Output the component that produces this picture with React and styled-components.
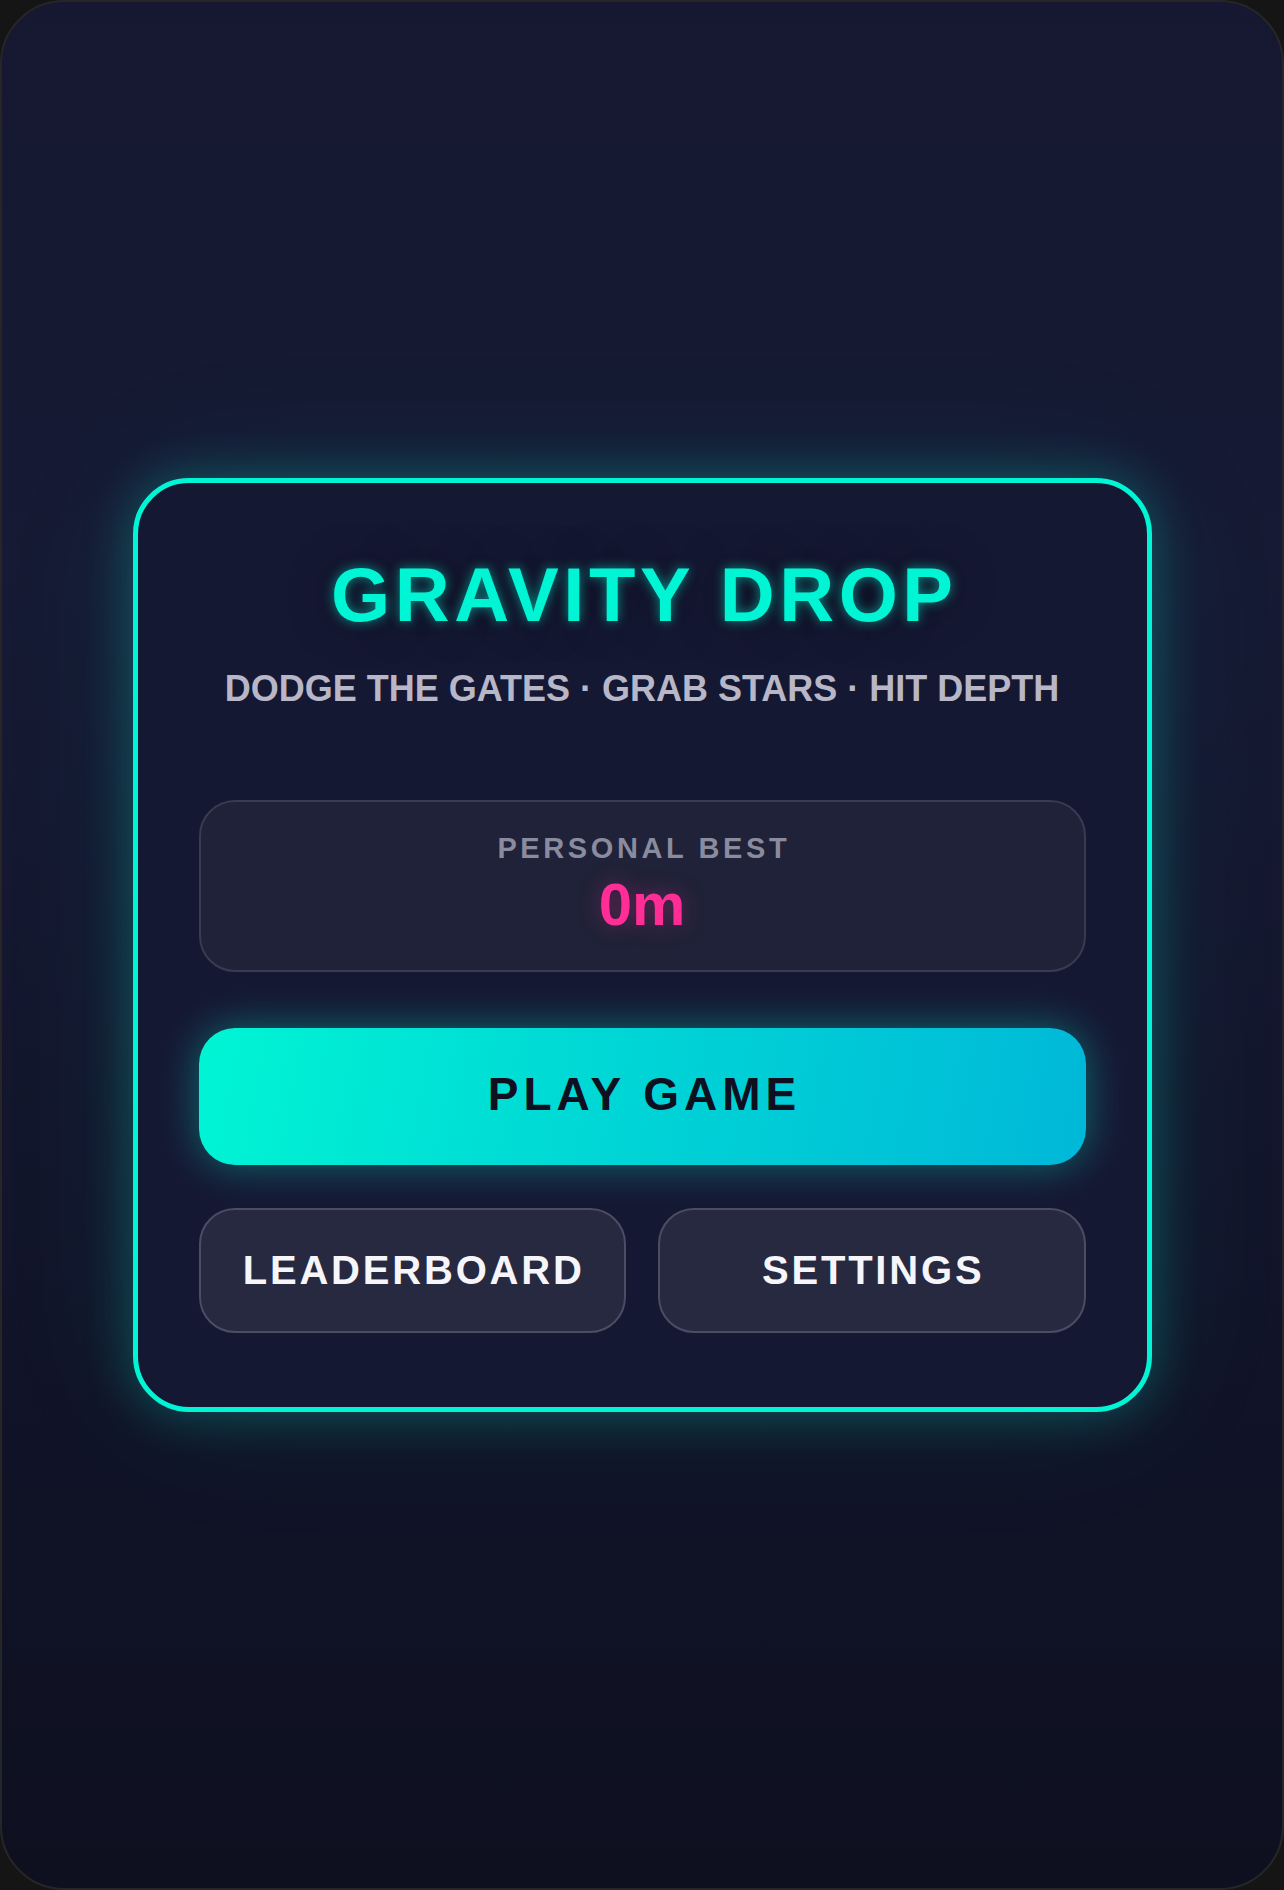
import styled, { createGlobalStyle } from "styled-components";

const GlobalStyle = createGlobalStyle`
  html, body {
    margin: 0;
    padding: 0;
    background: #151515;
  }
  body {
    font-family: "Liberation Sans", Arial, sans-serif;
  }
  * {
    box-sizing: border-box;
  }
`

const Screen = styled.main`
  width: 1284px;
  height: 1890px;
  border-radius: 64px;
  border: 2px solid #262628;
  background: linear-gradient(180deg, #151830 0%, #161a34 30%, #12152b 65%, #0e1020 100%);
  display: flex;
  align-items: center;
  justify-content: center;
  overflow: hidden;
`

const Card = styled.section`
  width: 1019px;
  height: 934px;
  border: 5px solid #00f5d4;
  border-radius: 56px;
  background: #151833;
  padding: 67px 61px 74px;
  display: flex;
  flex-direction: column;
  box-shadow: 0 0 50px rgba(0, 245, 212, 0.28), 0 0 150px rgba(0, 245, 212, 0.08);
`

const Title = styled.h1`
  margin: 0;
  font-size: 76px;
  line-height: 90px;
  font-weight: 700;
  letter-spacing: 4.6px;
  padding-left: 4.6px;
  text-align: center;
  color: #00f5d4;
  text-shadow: 0 0 12px rgba(0, 245, 212, 0.55), 0 0 40px rgba(0, 0, 0, 0.55);
`

const Tagline = styled.p`
  margin: 27px 0 0;
  font-size: 36px;
  line-height: 44px;
  font-weight: 700;
  text-align: center;
  color: #b7b7c7;
`

const BestBox = styled.div`
  margin-top: 89px;
  height: 172px;
  border: 2px solid #393b50;
  border-radius: 36px;
  background: #1f2238;
  padding: 28px 0 33px;
  display: flex;
  flex-direction: column;
  align-items: center;
`

const BestLabel = styled.span`
  font-size: 29px;
  line-height: 36px;
  font-weight: 700;
  letter-spacing: 3.6px;
  color: #8a8b9e;
  padding-left: 3.6px;
`

const BestValue = styled.span`
  margin-top: 6px;
  font-size: 60px;
  line-height: 66px;
  font-weight: 700;
  color: #ff2d95;
  text-shadow: 0 0 22px rgba(255, 45, 149, 0.35);
`

const PlayButton = styled.button`
  margin-top: 56px;
  height: 138px;
  width: 100%;
  border: none;
  border-radius: 36px;
  background: linear-gradient(100deg, #00f5d4 0%, #00d4d6 50%, #00b8d8 100%);
  box-shadow: 0 0 40px rgba(0, 245, 212, 0.38);
  color: #0e0f1f;
  font-family: inherit;
  font-size: 46px;
  font-weight: 700;
  letter-spacing: 5px;
  padding: 0 0 6px 5px;
  cursor: pointer;
`

const ButtonRow = styled.div`
  margin-top: 43px;
  display: grid;
  grid-template-columns: 1fr 1fr;
  gap: 32px;
`

const SecondaryButton = styled.button`
  height: 125px;
  border: 2px solid #4b4d62;
  border-radius: 36px;
  background: #262940;
  color: #f5f5fa;
  font-family: inherit;
  font-size: 40px;
  font-weight: 700;
  letter-spacing: 2.8px;
  padding: 0 0 0 2.8px;
  cursor: pointer;
`

export default function App() {
  return (
    <>
      <GlobalStyle />
      <Screen>
        <Card>
          <Title>GRAVITY DROP</Title>
          <Tagline>DODGE THE GATES · GRAB STARS · HIT DEPTH</Tagline>
          <BestBox>
            <BestLabel>PERSONAL BEST</BestLabel>
            <BestValue>0m</BestValue>
          </BestBox>
          <PlayButton>PLAY GAME</PlayButton>
          <ButtonRow>
            <SecondaryButton>LEADERBOARD</SecondaryButton>
            <SecondaryButton>SETTINGS</SecondaryButton>
          </ButtonRow>
        </Card>
      </Screen>
    </>
  );
}
